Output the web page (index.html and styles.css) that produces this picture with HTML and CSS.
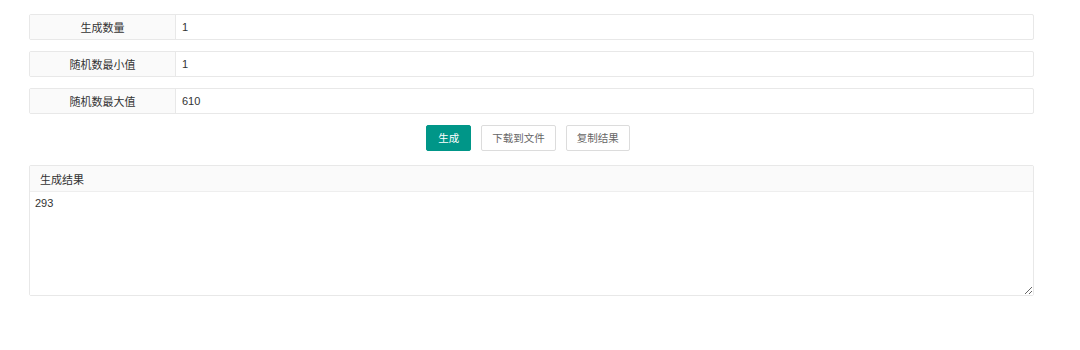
FILE: index.html
```html
<!DOCTYPE html>
<html lang="zh-CN">
<head>
<meta charset="utf-8">
<title>随机数生成</title>
<link rel="stylesheet" href="styles.css">
</head>
<body>
<div class="page">
  <div class="row">
    <div class="label">生成数量</div>
    <div class="value">1</div>
  </div>
  <div class="row">
    <div class="label">随机数最小值</div>
    <div class="value">1</div>
  </div>
  <div class="row">
    <div class="label">随机数最大值</div>
    <div class="value">610</div>
  </div>
  <div class="actions">
    <button class="btn btn-primary">生成</button>
    <button class="btn">下载到文件</button>
    <button class="btn">复制结果</button>
  </div>
  <div class="panel">
    <div class="panel-head">生成结果</div>
    <textarea class="result" readonly>293</textarea>
  </div>
</div>
</body>
</html>
```
FILE: styles.css
```css
* { box-sizing: border-box; }
html, body { margin: 0; padding: 0; background: #fff; }
body {
  font-family: "Noto Sans CJK SC", "Liberation Sans", sans-serif;
  font-size: 11px;
  color: #333;
}
.page {
  padding: 14px 46px 0 29px;
}
.row {
  display: flex;
  height: 26px;
  border: 1px solid #e8e8e8;
  border-radius: 2px;
  margin-bottom: 11px;
}
.label {
  width: 146px;
  flex: none;
  background: #fafafa;
  border-right: 1px solid #e8e8e8;
  display: flex;
  align-items: center;
  justify-content: center;
}
.value {
  flex: 1;
  display: flex;
  align-items: center;
  padding-left: 6px;
  font-family: "Liberation Sans", sans-serif;
}
.actions {
  display: flex;
  justify-content: center;
  gap: 10px;
  margin-bottom: 14px;
  padding-right: 7px;
}
.btn {
  height: 26px;
  padding: 0 10px;
  border: 1px solid #dcdcdc;
  border-radius: 2px;
  background: #fff;
  color: #666;
  font-family: "Noto Sans CJK SC", sans-serif;
  font-size: 10.5px;
  line-height: 24px;
}
.btn-primary {
  background: #009688;
  border-color: #009688;
  color: #fff;
  padding: 0 11px;
}
.panel {
  border: 1px solid #e8e8e8;
  border-radius: 2px;
}
.panel-head {
  height: 26px;
  background: #fafafa;
  border-bottom: 1px solid #eee;
  display: flex;
  align-items: center;
  padding-left: 10px;
}
.result {
  display: block;
  width: 100%;
  height: 103px;
  border: none;
  outline: none;
  padding: 5px 5px;
  font-family: "Liberation Sans", sans-serif;
  font-size: 11px;
  color: #333;
  resize: vertical;
}
```
